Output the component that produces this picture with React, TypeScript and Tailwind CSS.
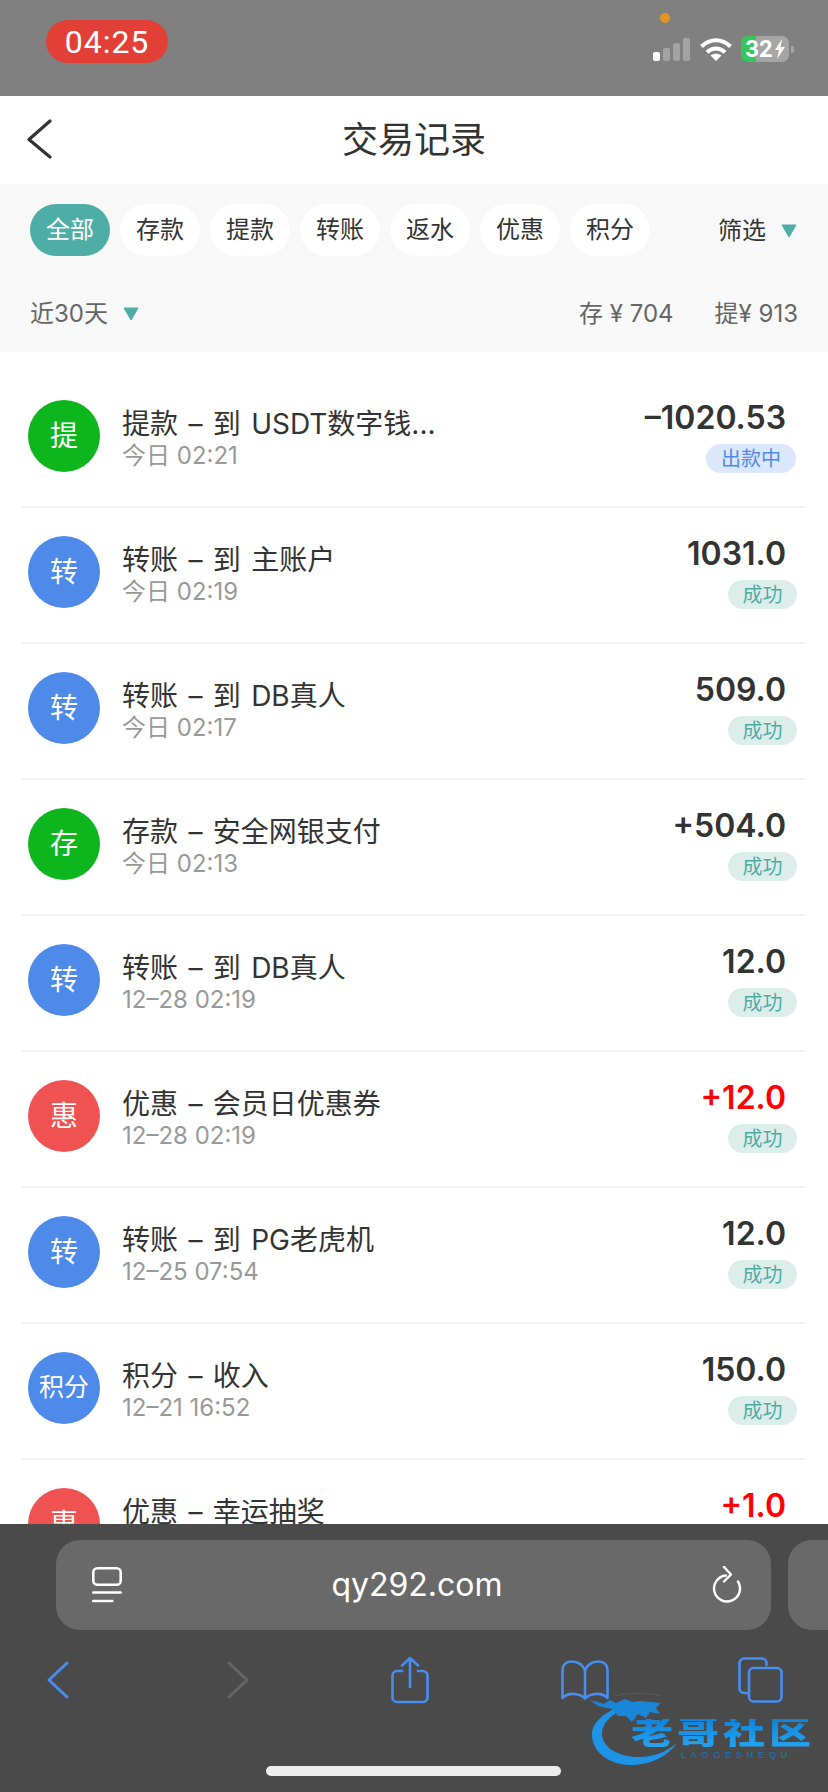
const CJK = "font-['Inter','Noto_Sans_CJK_SC',sans-serif]";

const filters = ["全部", "存款", "提款", "转账", "返水", "优惠", "积分"];

const GREEN = "bg-[#0eb61e]";
const BLUE = "bg-[#4d8aea]";
const RED = "bg-[#f05252]";

const records = [
  { mark: "提", color: GREEN, title: "提款 – 到 USDT数字钱...", time: "今日 02:21", amount: "–1020.53", status: "出款中" },
  { mark: "转", color: BLUE, title: "转账 – 到 主账户", time: "今日 02:19", amount: "1031.0", status: "成功" },
  { mark: "转", color: BLUE, title: "转账 – 到 DB真人", time: "今日 02:17", amount: "509.0", status: "成功" },
  { mark: "存", color: GREEN, title: "存款 – 安全网银支付", time: "今日 02:13", amount: "+504.0", status: "成功" },
  { mark: "转", color: BLUE, title: "转账 – 到 DB真人", time: "12–28 02:19", amount: "12.0", status: "成功" },
  { mark: "惠", color: RED, title: "优惠 – 会员日优惠券", time: "12–28 02:19", amount: "+12.0", status: "成功", red: true },
  { mark: "转", color: BLUE, title: "转账 – 到 PG老虎机", time: "12–25 07:54", amount: "12.0", status: "成功" },
  { mark: "积分", color: BLUE, title: "积分 – 收入", time: "12–21 16:52", amount: "150.0", status: "成功" },
  { mark: "惠", color: RED, title: "优惠 – 幸运抽奖", time: "12–20 11:08", amount: "+1.0", status: "成功", red: true },
];

function Caret() {
  return (
    <svg width="16" height="14" viewBox="0 0 16 14" className="shrink-0">
      <path d="M1 1h14L8 13z" fill="#4fada8" stroke="#4fada8" strokeWidth="1" strokeLinejoin="round" />
    </svg>
  );
}

function StatusBar() {
  return (
    <div className="relative flex h-[96px] shrink-0 items-start justify-between bg-[#808080]">
      <div className="ml-[46px] mt-[20px] flex h-[43px] w-[122px] items-center justify-center rounded-[22px] bg-[#e23f37] font-['Roboto',sans-serif] text-[32px] tracking-[1px] text-white">
        04:25
      </div>
      <span className="absolute left-[660px] top-[13px] h-[10px] w-[10px] rounded-full bg-[#e2951f]" />
      <div className="mr-[34px] mt-[36px] flex items-center">
        <div className="flex h-[23px] items-end gap-[3px]">
          <span className="h-[9px] w-[7px] rounded-[2px] bg-white" />
          <span className="h-[13px] w-[7px] rounded-[2px] bg-[#a3a3a3]" />
          <span className="h-[18px] w-[7px] rounded-[2px] bg-[#a3a3a3]" />
          <span className="h-[23px] w-[7px] rounded-[2px] bg-[#a3a3a3]" />
        </div>
        <svg width="32" height="24" viewBox="0 0 32 24" className="ml-[10px]" fill="none" stroke="#fff" strokeWidth="4">
          <path d="M1.500 9.500C10 1 22 1 30.500 9.500" />
          <path d="M7 15.200c5.400-5 12.600-5 18 0" />
          <path d="M16 24l-5.500-5.500c3.200-2.400 7.800-2.400 11 0z" fill="#fff" stroke="none" />
        </svg>
        <div className="ml-[9px] flex h-[26px] w-[48px] items-center justify-center rounded-[7px] bg-[linear-gradient(90deg,#34c759_31%,#a5a5a5_31%)] font-['Roboto',sans-serif] text-[24px] font-bold text-white">
          32
          <svg width="10" height="20" viewBox="0 0 10 20" className="ml-[2px]" fill="#fff">
            <path d="M7 0L0 11h4l-2 9 8-12H5.500z" />
          </svg>
        </div>
        <span className="ml-[2px] h-[7px] w-[3px] rounded-r-[2px] bg-[#a5a5a5]" />
      </div>
    </div>
  );
}

function Header() {
  return (
    <div className="relative flex h-[88px] shrink-0 items-center justify-center bg-white">
      <svg width="26" height="40" viewBox="0 0 26 40" className="absolute left-[26px] top-[23px]" fill="none" stroke="#333" strokeWidth="3.200" strokeLinecap="round" strokeLinejoin="round">
        <path d="M24 2L3 20.500 24 38" />
      </svg>
      <span className="text-[36px] leading-none text-[#333]">交易记录</span>
    </div>
  );
}

function Filters() {
  return (
    <div className="h-[168px] shrink-0 bg-[#f8f8f8]">
      <div className="flex items-start pl-[30px] pr-[31px] pt-[20px]">
        <div className="flex gap-[10px]">
          {filters.map((f, i) => (
            <button
              key={f}
              className={`flex h-[52px] w-[80px] items-center justify-center rounded-[26px] text-[24px] ${
                i === 0 ? "bg-[#4fada8] text-white" : "bg-white text-[#333]"
              }`}
            >
              {f}
            </button>
          ))}
        </div>
        <div className="ml-auto flex h-[54px] items-center gap-[15px] text-[24px] text-[#333]">
          <span>筛选</span>
          <Caret />
        </div>
      </div>
      <div className="mt-[35px] flex h-[42px] items-center pl-[30px] pr-[30px] text-[24px] text-[#666]">
        <span>近30天</span>
        <span className="ml-[15px]">
          <Caret />
        </span>
        <span className="ml-auto">存 ¥ 704</span>
        <span className="ml-[41px]">提¥ 913</span>
      </div>
    </div>
  );
}

function Row({ r }: { r: (typeof records)[number] }) {
  const pending = r.status === "出款中";
  return (
    <div className="mx-[22px] flex h-[136px] items-start border-b-2 border-[#f2f2f2] pl-[6px] pr-[9px]">
      <div className={`mt-[28px] flex h-[72px] w-[72px] shrink-0 items-center justify-center rounded-full text-white ${r.color} ${r.mark.length > 1 ? "text-[25px]" : "text-[28px]"}`}>
        {r.mark}
      </div>
      <div className="ml-[22px] min-w-0 flex-1 pt-[34px]">
        <div className="h-[36px] truncate text-[28px] leading-[36px] text-[#333] [word-spacing:2.500px]">{r.title}</div>
        <div className="h-[28px] text-[24px] leading-[28px] text-[#999]">{r.time}</div>
      </div>
      <div className="flex shrink-0 flex-col items-end pt-[26px]">
        <div className={`mr-[11px] h-[40px] text-[32px] font-semibold leading-[40px] ${r.red ? "text-[#ff0000]" : "text-[#333]"}`}>
          {r.amount}
        </div>
        <div
          className={`mt-[6px] flex h-[29px] items-center justify-center rounded-[15px] text-[20px] ${
            pending ? "mr-[1px] w-[90px] bg-[#dbe7fb] text-[#4d8aea]" : "w-[69px] bg-[#dceeea] text-[#4fada5]"
          }`}
        >
          {r.status}
        </div>
      </div>
    </div>
  );
}

function BrowserBar() {
  return (
    <div className="relative h-[268px] shrink-0 bg-[#4a4a4a] pt-[16px]">
      <div className="flex gap-[17px] pl-[56px]">
        <div className="flex h-[90px] w-[715px] shrink-0 items-center justify-between rounded-[24px] bg-[#696969] pl-[36px] pr-[29px]">
          <svg width="30" height="36" viewBox="0 0 30 36" fill="none" stroke="#fff" strokeWidth="2.600" strokeLinecap="round">
            <rect x="1.300" y="1.300" width="27.400" height="16.400" rx="4" />
            <path d="M1.300 25.500h27.400M1.300 34h19" />
          </svg>
          <span className="text-[32px] leading-none text-white">qy292.com</span>
          <svg width="30" height="38" viewBox="0 0 30 38" fill="none" stroke="#fff" strokeWidth="2.400" strokeLinecap="round" strokeLinejoin="round">
            <path d="M14 9.500a13 13 0 1 0 12 6" />
            <path d="M12 1l7 7.500-7 7" />
          </svg>
        </div>
        <div className="h-[90px] flex-1 rounded-l-[24px] bg-[#696969]" />
      </div>

      <div className="mt-[26px] flex h-[48px] items-center pl-[47px]">
        <svg width="22" height="38" viewBox="0 0 22 38" fill="none" stroke="#4a8df0" strokeWidth="3" strokeLinecap="round" strokeLinejoin="round">
          <path d="M20 2L2 19l18 17" />
        </svg>
        <svg width="22" height="38" viewBox="0 0 22 38" className="ml-[158px]" fill="none" stroke="#666" strokeWidth="3" strokeLinecap="round" strokeLinejoin="round">
          <path d="M2 2l18 17L2 36" />
        </svg>
        <svg width="38" height="48" viewBox="0 0 38 48" className="ml-[142px]" fill="none" stroke="#4a8df0" strokeWidth="2.600" strokeLinecap="round" strokeLinejoin="round">
          <path d="M11 15H6a4.500 4.500 0 0 0-4.500 4.500v22A4.500 4.500 0 0 0 6 46h26a4.500 4.500 0 0 0 4.500-4.500v-22A4.500 4.500 0 0 0 32 15h-5" />
          <path d="M19 31V2M11 9.500L19 2l8 7.500" />
        </svg>
        <svg width="48" height="40" viewBox="0 0 48 40" className="ml-[132px]" fill="none" stroke="#4a8df0" strokeWidth="2.600" strokeLinecap="round" strokeLinejoin="round">
          <path d="M24 38V11C22 4 16 1.500 10 1.500 5 1.500 1.500 5 1.500 10v28c3-3 7-4.500 12-4 5 .4 8 2 10.500 4.500 2.500-2.500 5.500-4 10.500-4.500 5-.5 9 1 12 4V10c0-5-3.500-8.500-8.500-8.500C32 1.500 26 4 24 11" />
        </svg>
        <svg width="45" height="46" viewBox="0 0 45 46" className="ml-[129px]" fill="none" stroke="#4a8df0" strokeWidth="2.600" strokeLinejoin="round" strokeLinecap="round">
          <path d="M9 36H6a4.500 4.500 0 0 1-4.500-4.500V6A4.500 4.500 0 0 1 6 1.500h18A4.500 4.500 0 0 1 28.500 6v2" />
          <rect x="11" y="11" width="32.500" height="33.500" rx="4.500" />
        </svg>
      </div>

      {/* 水印 */}
      <div className="absolute left-[590px] top-[168px] h-[90px] w-[230px]">
        <svg width="125" height="88" viewBox="0 0 125 88" className="absolute left-0 top-0 blur-[0.6px]">
          <path
            d="M30 14C12 22 1 32 2 44C3 62 22 74 44 73C62 72 78 64 87 51C76 60 62 66 46 65C26 64 11 54 12 40C13 30 22 22 34 17z"
            fill="#1d94e8"
          />
          <path
            d="M0 8L14 12 20 8 26 11 35 7 42 10 50 9 60 10 71 11 66 16 70 22 60 20 56 26 48 22 42 30 36 24 28 24 22 17 8 14z"
            fill="#1a86d8"
          />
          <path d="M24 4C36 1 58 0 70 4" fill="none" stroke="#565c61" strokeWidth="1" />
        </svg>
        <div className="absolute left-[41px] top-[22px] origin-center scale-y-[0.75] whitespace-nowrap bg-gradient-to-b from-[#0d84dc] to-[#25a3f2] bg-clip-text text-[42px] font-black leading-[38px] tracking-[4px] text-transparent">
          老哥社区
        </div>
        <div className="absolute left-[91px] top-[58px] whitespace-nowrap font-['Liberation_Sans',sans-serif] text-[9px] leading-[10px] tracking-[4.800px] text-[#1677c4]">
          LAOGESHEQU
        </div>
      </div>

      <div className="absolute left-[266px] top-[242px] h-[10px] w-[295px] rounded-full bg-[#ededed]" />
    </div>
  );
}

export default function App() {
  return (
    <div className={`flex h-[1792px] w-[828px] flex-col overflow-hidden bg-white ${CJK}`}>
      <StatusBar />
      <Header />
      <Filters />
      <div className="min-h-0 flex-1 overflow-hidden pt-[20px]">
        {records.map((r, i) => (
          <Row key={i} r={r} />
        ))}
      </div>
      <BrowserBar />
    </div>
  );
}
